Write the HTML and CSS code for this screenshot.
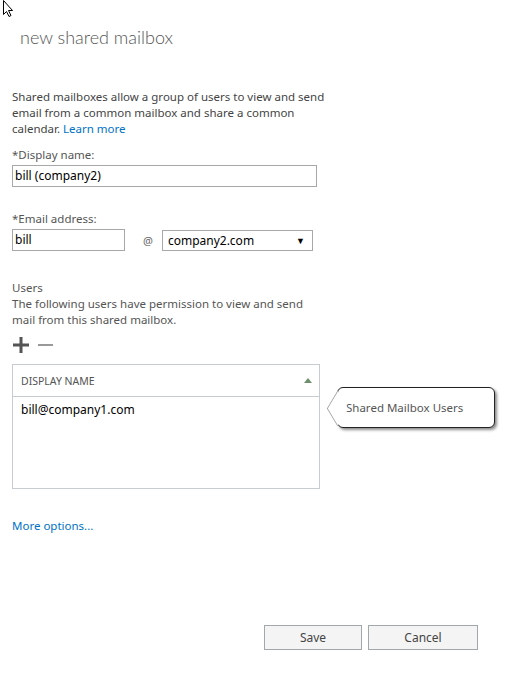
FILE: index.html
```html
<!DOCTYPE html>
<html>
<head>
<meta charset="utf-8">
<link rel="stylesheet" href="styles.css">
</head>
<body>
<svg class="cursor" width="14" height="18" viewBox="0 0 14 18"><path d="M3.5 0.5 L3.5 14.5 L6.5 11.5 L9 16.5 L11 15.5 L8.5 10.5 L12.5 10.5 Z" fill="#fff" stroke="#000" stroke-width="1"/></svg>
<div class="page">
  <h1 class="title">new shared mailbox</h1>
  <p class="intro">Shared mailboxes allow a group of users to view and send email from a common mailbox and share a common calendar. <a class="link" href="#">Learn more</a></p>

  <div class="field">
    <label class="label">*Display name:</label>
    <div class="input wide">bill (company2)</div>
  </div>

  <div class="field">
    <label class="label">*Email address:</label>
    <div class="email-row">
      <div class="input short">bill</div>
      <span class="at">@</span>
      <div class="select"><span>company2.com</span><span class="caret">&#9660;</span></div>
    </div>
  </div>

  <div class="users">
    <div class="label">Users</div>
    <div class="label desc">The following users have permission to view and send mail from this shared mailbox.</div>
    <div class="tools">
      <svg width="18" height="18" viewBox="0 0 18 18"><rect x="1" y="7.5" width="16" height="3" fill="#555"/><rect x="7.5" y="1" width="3" height="16" fill="#555"/></svg>
      <svg width="18" height="18" viewBox="0 0 18 18"><rect x="1" y="8" width="15" height="2" fill="#999"/></svg>
    </div>
    <div class="table-wrap">
      <div class="table">
        <div class="thead"><span>DISPLAY NAME</span><span class="sort"></span></div>
        <div class="row">bill@company1.com</div>
      </div>
      <div class="callout">Shared Mailbox Users</div>
    </div>
  </div>

  <a class="link more" href="#">More options...</a>

  <div class="buttons">
    <button class="btn save">Save</button>
    <button class="btn cancel">Cancel</button>
  </div>
</div>
</body>
</html>
```
FILE: styles.css
```css
html, body {
  margin: 0;
  padding: 0;
  background: #fff;
}
body {
  font-family: "Segoe UI", "Noto Sans", "Open Sans", sans-serif;
  color: #333;
  font-size: 11.5px;
  position: relative;
  width: 510px;
  height: 685px;
  overflow: hidden;
}
.cursor {
  position: absolute;
  left: 0;
  top: 0;
}
.page {
  padding: 0 0 0 12px;
}
.title {
  margin: 0;
  padding: 25px 0 0 8px;
  font-family: "Lato", "Noto Sans", sans-serif;
  font-weight: 300;
  font-size: 18px;
  line-height: 24px;
  color: #555;
  height: 38px;
}
.intro {
  margin: 26px 0 0 0;
  width: 318px;
  line-height: 16px;
  color: #444;
}
.link {
  color: #0072c6;
  text-decoration: none;
}
.field {
  margin-top: 10px;
}
.label {
  color: #555;
  line-height: 16px;
}
.desc {
  width: 300px;
}
.input {
  box-sizing: border-box;
  height: 22px;
  border: 1px solid #a8a8a8;
  padding: 1px 2px;
  line-height: 18px;
  color: #000;
  font-size: 12px;
  margin-top: 2px;
}
.wide { width: 305px; }
.field + .field { margin-top: 24px; }
.email-row {
  display: flex;
  align-items: center;
  margin-top: 2px;
}
.email-row .input { margin-top: 0; }
.short { width: 113px; }
.at {
  margin: 0 9px 0 18px;
  color: #666;
  font-size: 11px;
}
.select {
  box-sizing: border-box;
  width: 151px;
  height: 21px;
  border: 1px solid #a8a8a8;
  display: flex;
  justify-content: space-between;
  align-items: center;
  padding: 0 7px 0 5px;
  font-size: 12px;
  color: #000;
}
.caret {
  font-size: 9px;
}
.users {
  margin-top: 29px;
}
.tools {
  display: flex;
  gap: 7px;
  margin-top: 8px;
  height: 18px;
}
.table-wrap {
  position: relative;
  margin-top: 10px;
}
.table {
  box-sizing: border-box;
  width: 308px;
  height: 125px;
  border: 1px solid #c6ccd2;
}
.thead {
  height: 31px;
  border-bottom: 1px solid #c6ccd2;
  display: flex;
  align-items: center;
  justify-content: space-between;
  padding: 0 7px 0 8px;
  font-size: 10.5px;
  color: #555;
}
.sort {
  width: 0;
  height: 0;
  border-left: 4px solid transparent;
  border-right: 4px solid transparent;
  border-bottom: 5px solid #6f8f6f;
}
.row {
  padding: 4px 8px;
  color: #000;
  font-size: 12px;
}
.callout {
  position: absolute;
  left: 325px;
  top: 23px;
  width: 158px;
  height: 41px;
  box-sizing: border-box;
  border: 1px solid #222;
  border-radius: 6px;
  box-shadow: 2px 2px 3px rgba(0,0,0,0.45);
  background: #fff;
  padding: 0 0 0 8px;
  line-height: 40px;
  color: #555;
}
.callout::before {
  content: "";
  position: absolute;
  left: -13px;
  top: 8px;
  width: 24px;
  height: 24px;
  background: #fff;
  border-left: 1px solid #999;
  border-bottom: 1px solid #999;
  transform: scaleX(0.6) rotate(45deg);
}
.more {
  display: block;
  margin-top: 29px;
}
.buttons {
  display: flex;
  gap: 6px;
  margin: 92px 0 0 252px;
}
.btn {
  font-family: inherit;
  font-size: 12px;
  height: 25px;
  border: 1px solid #a0a8ab;
  background: #f4f4f4;
  color: #444;
  padding: 0;
}
.save { width: 98px; }
.cancel { width: 110px; }
```
